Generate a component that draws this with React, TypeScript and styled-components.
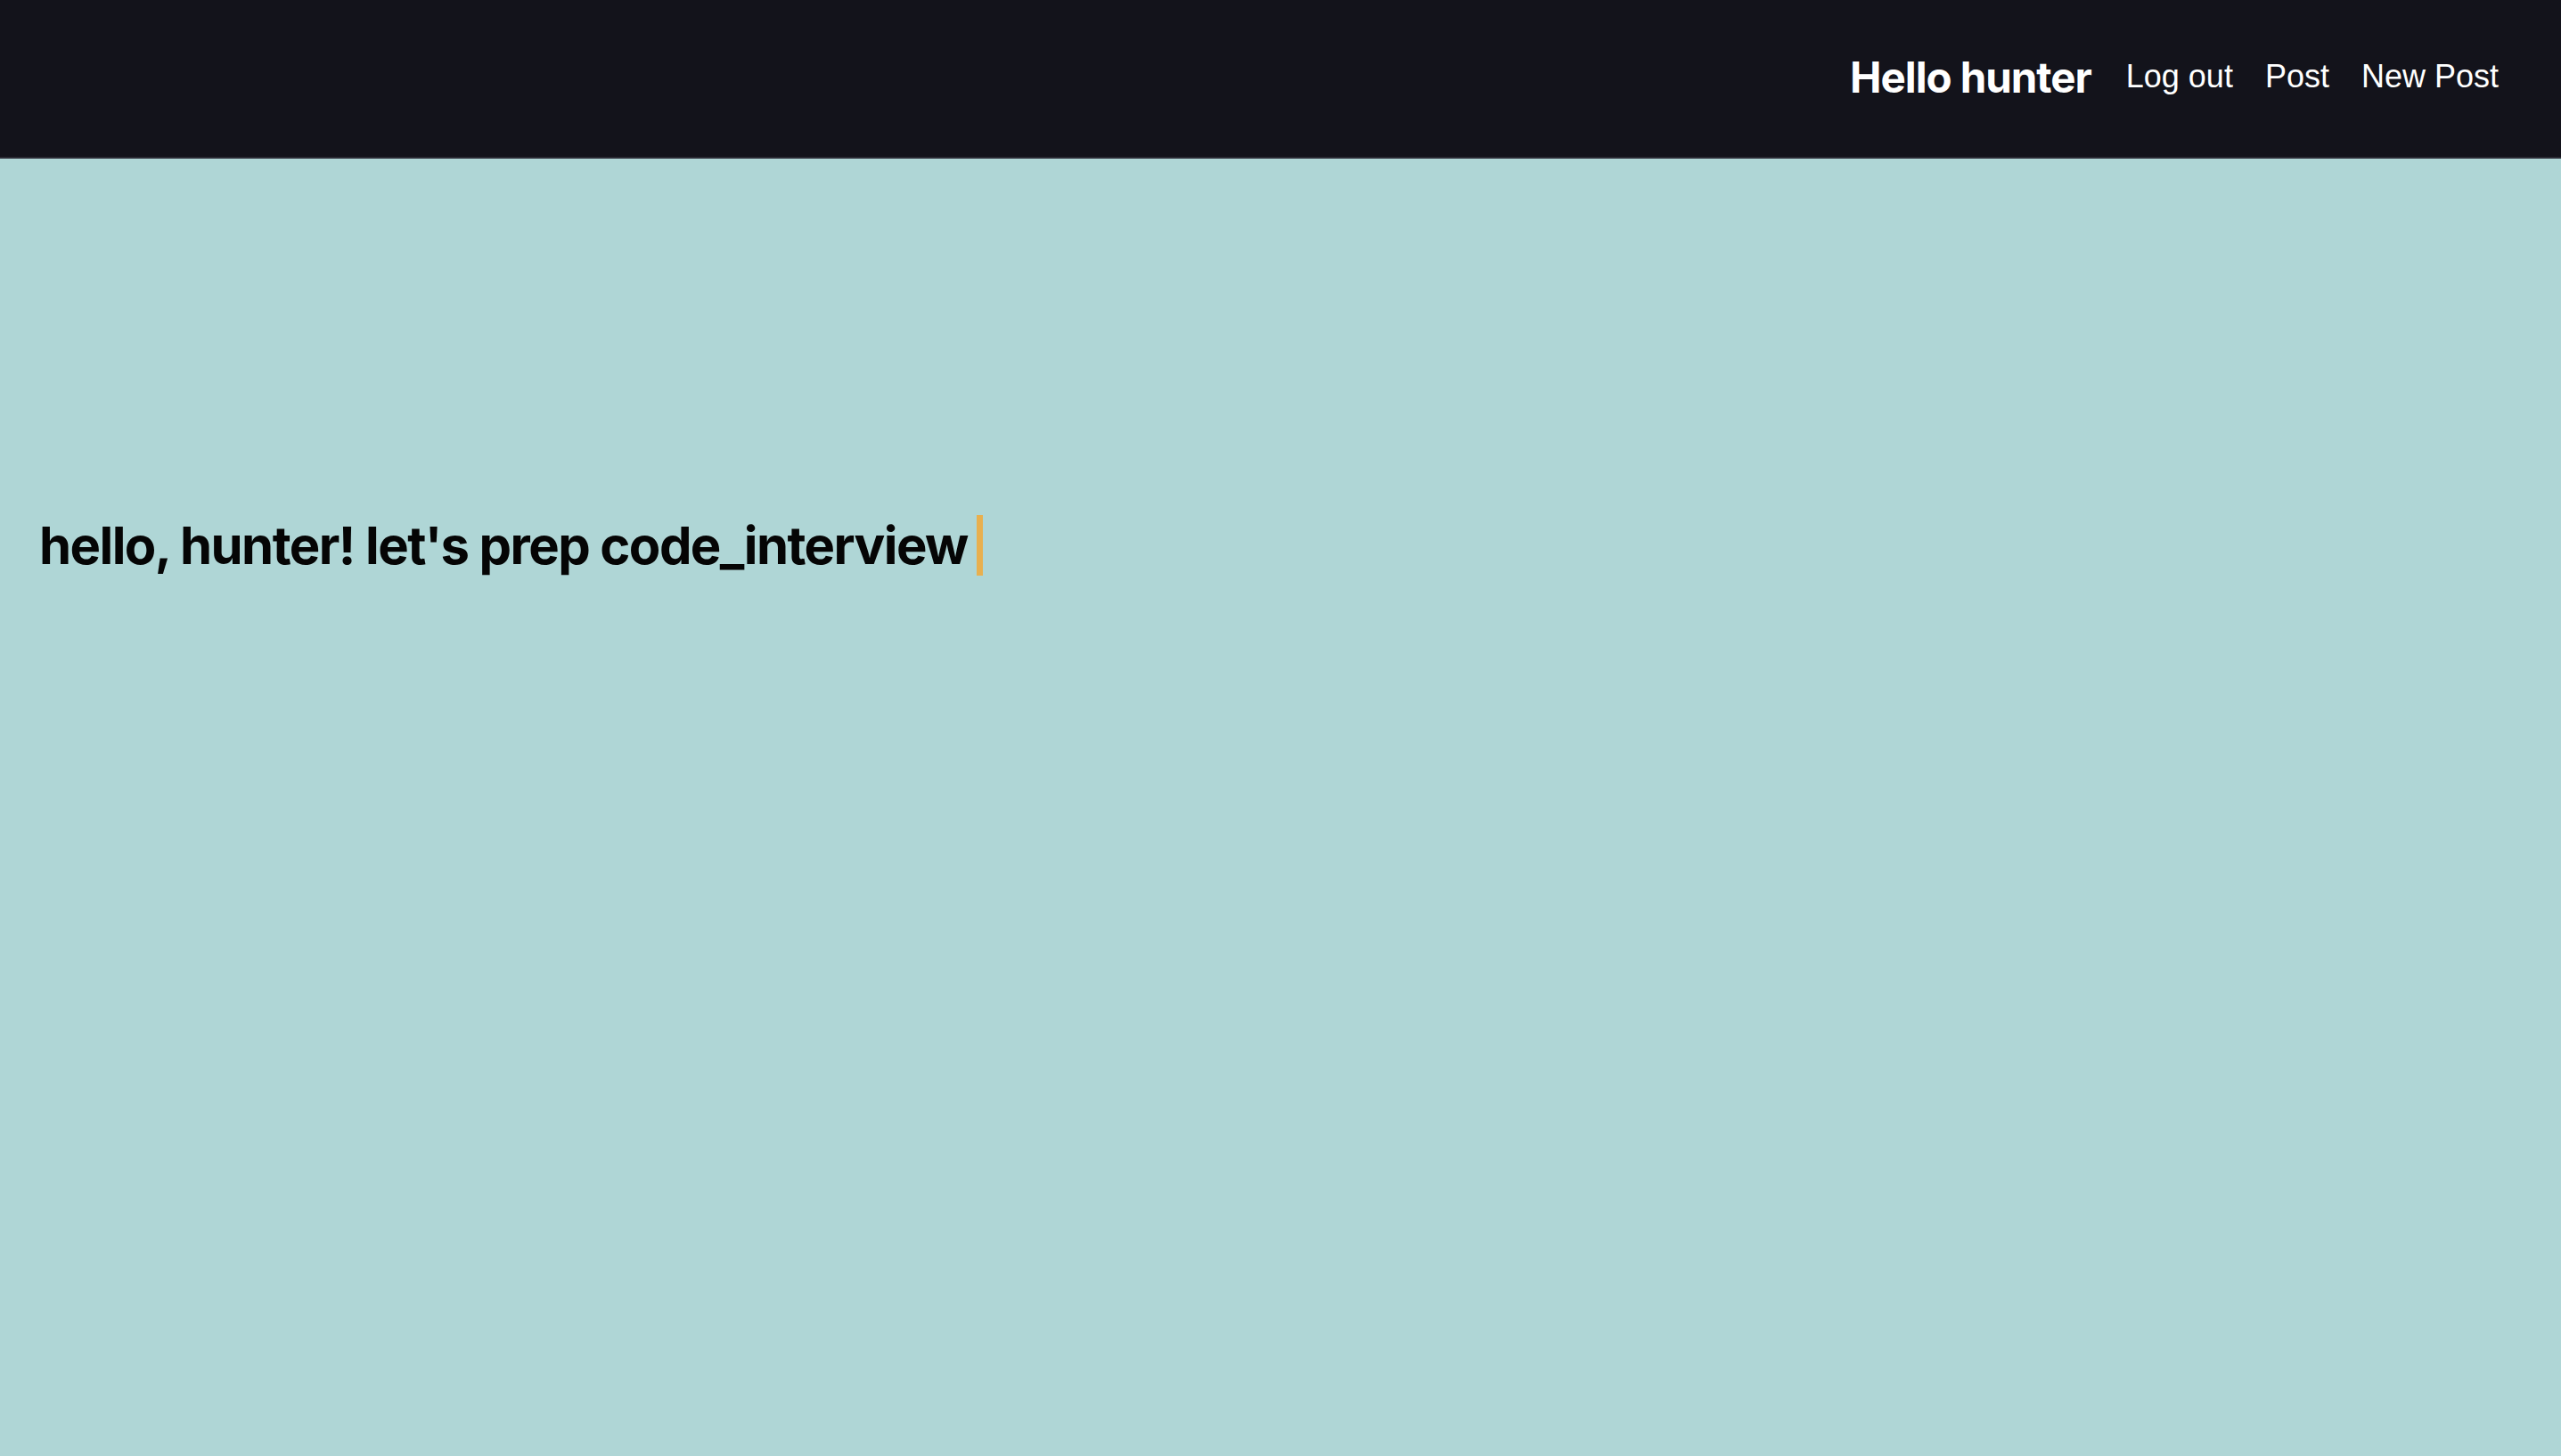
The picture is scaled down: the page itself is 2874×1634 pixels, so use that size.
import React from "react";
import styled, { createGlobalStyle, keyframes } from "styled-components";

const GlobalStyle = createGlobalStyle`
	html, body {
		margin: 0;
		padding: 0;
		background: #afd6d6;
	}
	#root {
		min-height: 100vh;
	}
`;

const links = ["Log out", "Post", "New Post"];

const App = () => {
	return (
		<>
			<GlobalStyle />
			<Page>
				<Header>
					<Nav>
						<Greeting>Hello hunter</Greeting>
						{links.map((label) => (
							<NavLink key={label} href="#">
								{label}
							</NavLink>
						))}
					</Nav>
				</Header>
				<Hero>
					<Typed>
						hello, hunter! let's prep code_interview
						<Caret />
					</Typed>
				</Hero>
			</Page>
		</>
	);
};

export default App;

const blink = keyframes`
	0%, 100% {
		opacity: 1;
	}
`;

const Page = styled.div`
	display: flex;
	flex-direction: column;
	min-height: 100vh;
	background: #afd6d6;
`;

const Header = styled.header`
	display: flex;
	align-items: center;
	justify-content: flex-end;
	height: 176px;
	padding: 0 70px 0 0;
	background: #13131b;
	border-bottom: 2px solid #2b2b35;
`;

const Nav = styled.nav`
	display: flex;
	align-items: center;
	gap: 0 36px;
	margin-top: -4px;
`;

const Greeting = styled.h1`
	margin: 0 3px 0 0;
	color: #ffffff;
	font-family: Inter, "Liberation Sans", sans-serif;
	font-weight: 700;
	font-size: 47.5px;
	letter-spacing: -0.022em;
`;

const NavLink = styled.a`
	color: #ffffff;
	text-decoration: none;
	font-family: "Liberation Sans", Arial, sans-serif;
	font-size: 36px;
	line-height: 1;
`;

const Hero = styled.main`
	display: flex;
	align-items: center;
	padding: 400px 44px 0;
`;

const Typed = styled.h2`
	display: flex;
	align-items: center;
	margin: 0;
	color: #050505;
	font-family: Inter, "Liberation Sans", sans-serif;
	font-weight: 700;
	font-size: 58px;
	letter-spacing: -0.027em;
	line-height: 68px;
`;

const Caret = styled.span`
	display: inline-block;
	width: 7px;
	height: 68px;
	margin-left: 10px;
	background: #e8b04f;
	animation: ${blink} 1s step-end infinite;
`;
